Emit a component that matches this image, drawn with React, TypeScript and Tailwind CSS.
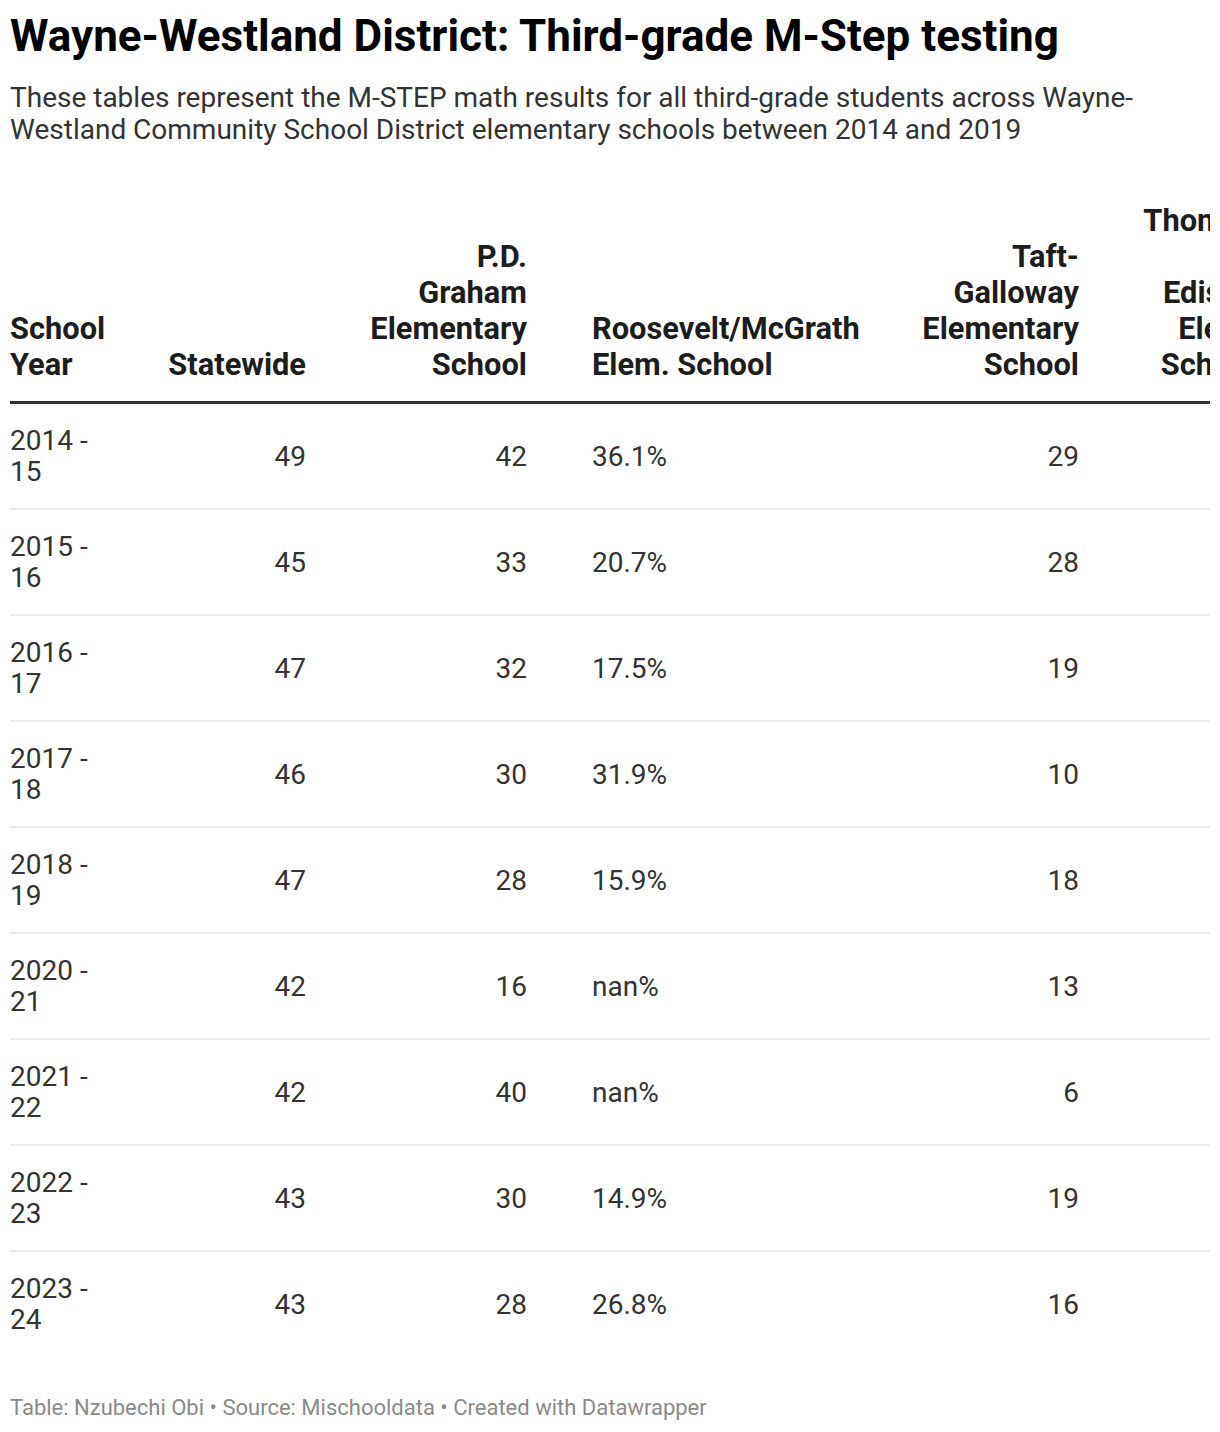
import React from "react";

type Row = {
  year: [string, string];
  state: string;
  graham: string;
  roosevelt: string;
  taft: string;
  edison: string;
};

const rows: Row[] = [
  { year: ["2014 -", "15"], state: "49", graham: "42", roosevelt: "36.1%", taft: "29", edison: "31" },
  { year: ["2015 -", "16"], state: "45", graham: "33", roosevelt: "20.7%", taft: "28", edison: "25" },
  { year: ["2016 -", "17"], state: "47", graham: "32", roosevelt: "17.5%", taft: "19", edison: "22" },
  { year: ["2017 -", "18"], state: "46", graham: "30", roosevelt: "31.9%", taft: "10", edison: "27" },
  { year: ["2018 -", "19"], state: "47", graham: "28", roosevelt: "15.9%", taft: "18", edison: "20" },
  { year: ["2020 -", "21"], state: "42", graham: "16", roosevelt: "nan%", taft: "13", edison: "12" },
  { year: ["2021 -", "22"], state: "42", graham: "40", roosevelt: "nan%", taft: "6", edison: "18" },
  { year: ["2022 -", "23"], state: "43", graham: "30", roosevelt: "14.9%", taft: "19", edison: "21" },
  { year: ["2023 -", "24"], state: "43", graham: "28", roosevelt: "26.8%", taft: "16", edison: "24" },
];

const cols = "grid grid-cols-[156px_140px_221px_373px_179px_177px] w-[1246px]";

const Lines = ({ lines }: { lines: string[] }) => (
  <>
    {lines.map((l, i) => (
      <div key={i} className="whitespace-nowrap h-[36px]">
        {l}
      </div>
    ))}
  </>
);

const App = () => {
  return (
    <div className="bg-white min-h-screen px-[10px] pt-[12px] pb-[12px] font-['Roboto',sans-serif]">
      <h1 className="text-[44px] leading-[48px] font-bold text-black whitespace-nowrap">
        Wayne-Westland District: Third-grade M-Step testing
      </h1>
      <p className="mt-[22px] text-[28px] leading-[32px] text-[#333] w-[1200px]">
        These tables represent the M-STEP math results for all third-grade students across Wayne-Westland
        Community School District elementary schools between 2014 and 2019
      </p>

      <div className="mt-[57px] w-[1200px] overflow-hidden">
        <div className={`${cols} items-end text-[30.8px] leading-[36px] font-bold text-[#1d1d1d] pb-[18px] border-b-[3px] border-[#333]`}>
          <div className="text-left">
            <Lines lines={["School", "Year"]} />
          </div>
          <div className="text-right">
            <Lines lines={["Statewide"]} />
          </div>
          <div className="text-right">
            <Lines lines={["P.D.", "Graham", "Elementary", "School"]} />
          </div>
          <div className="text-left pl-[65px]">
            <Lines lines={["Roosevelt/McGrath", "Elem. School"]} />
          </div>
          <div className="text-right">
            <Lines lines={["Taft-", "Galloway", "Elementary", "School"]} />
          </div>
          <div className="text-right">
            <Lines lines={["Thomas", "A.", "Edison", "Elem.", "School"]} />
          </div>
        </div>

        {rows.map((r, i) => (
          <div
            key={i}
            className={`${cols} items-center text-[28px] leading-[31px] text-[#333] py-[21px] ${
              i < rows.length - 1 ? "border-b-2 border-[#ececec]" : "border-b-2 border-transparent"
            }`}
          >
            <div className="text-left">
              <div>{r.year[0]}</div>
              <div>{r.year[1]}</div>
            </div>
            <div className="text-right">{r.state}</div>
            <div className="text-right">{r.graham}</div>
            <div className="text-left pl-[65px]">{r.roosevelt}</div>
            <div className="text-right">{r.taft}</div>
            <div className="text-right">{r.edison}</div>
          </div>
        ))}
      </div>

      <p className="mt-[38px] text-[22px] leading-[24px] text-[#8a8a8a]">
        Table: Nzubechi Obi • Source: Mischooldata • Created with Datawrapper
      </p>
    </div>
  );
};

export default App;
